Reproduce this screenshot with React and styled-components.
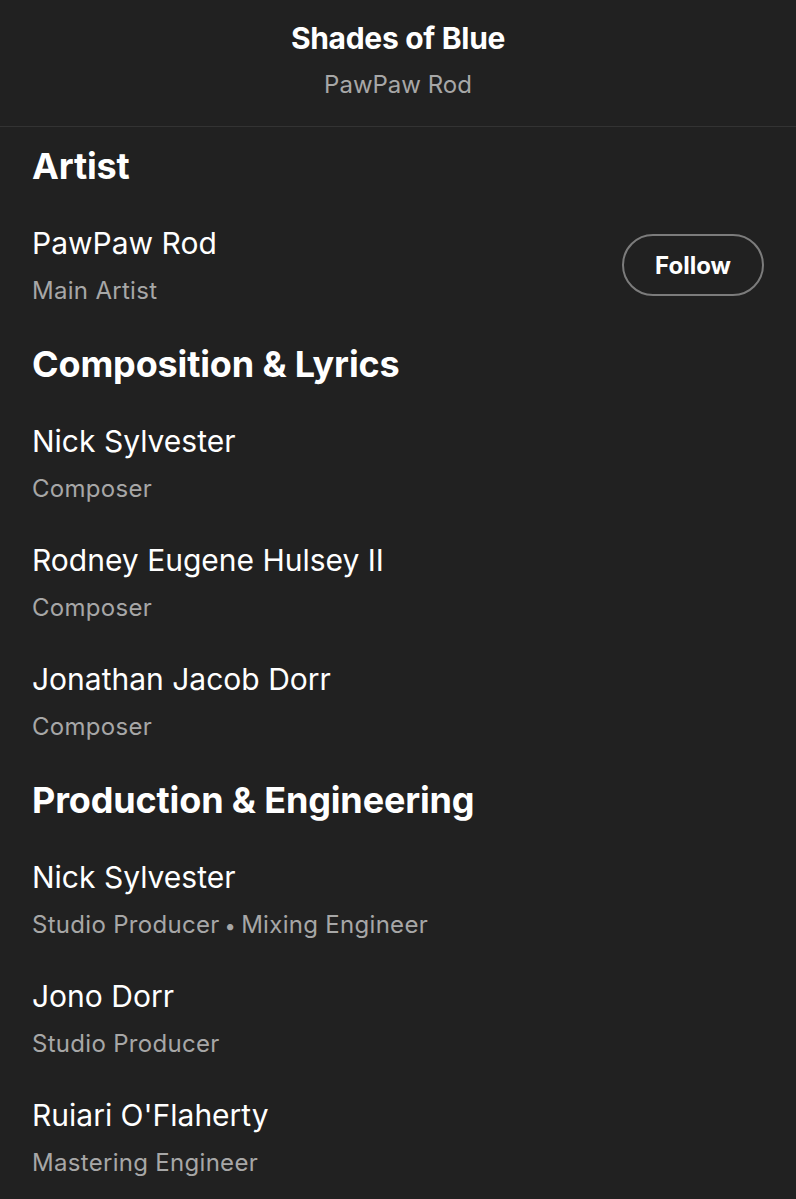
import React from 'react';
import styled, { createGlobalStyle } from 'styled-components';

const credits = [
  {
    title: 'Artist',
    people: [{ name: 'PawPaw Rod', roles: ['Main Artist'], follow: true }]
  },
  {
    title: 'Composition & Lyrics',
    people: [
      { name: 'Nick Sylvester', roles: ['Composer'] },
      { name: 'Rodney Eugene Hulsey II', roles: ['Composer'] },
      { name: 'Jonathan Jacob Dorr', roles: ['Composer'] }
    ]
  },
  {
    title: 'Production & Engineering',
    people: [
      { name: 'Nick Sylvester', roles: ['Studio Producer', 'Mixing Engineer'] },
      { name: 'Jono Dorr', roles: ['Studio Producer'] },
      { name: "Ruiari O'Flaherty", roles: ['Mastering Engineer'] }
    ]
  }
];

const GlobalStyle = createGlobalStyle`
  html, body {
    margin: 0;
    background: #212121;
  }
  body {
    font-family: Inter, "Noto Sans", sans-serif;
    color: #fff;
    -webkit-font-smoothing: antialiased;
  }
`;

const Page = styled.div`
  min-height: 1199px;
  background: #212121;
`;

const Header = styled.header`
  display: flex;
  flex-direction: column;
  align-items: center;
  gap: 13px;
  padding: 20px 32px 25px;
  border-bottom: 1px solid #333;
`;

const Title = styled.h1`
  margin: 0;
  font-size: 30px;
  line-height: 36px;
  font-weight: 700;
  letter-spacing: -0.3px;
`;

const Subtitle = styled.div`
  font-size: 24px;
  line-height: 32px;
  color: #a7a7a7;
`;

const Body = styled.main`
  display: flex;
  flex-direction: column;
  gap: 35px;
  padding: 17px 32px 0;
`;

const Section = styled.section`
  display: flex;
  flex-direction: column;
  gap: 35px;
`;

const Heading = styled.h2`
  margin: 0;
  font-size: 36px;
  line-height: 44px;
  font-weight: 700;
  letter-spacing: -0.15px;
`;

const Row = styled.div`
  display: flex;
  align-items: center;
  justify-content: space-between;
`;

const Info = styled.div`
  display: flex;
  flex-direction: column;
  gap: 12px;
`;

const Name = styled.div`
  font-size: 30px;
  line-height: 40px;
  font-weight: 400;
`;

const Role = styled.div`
  height: 32px;
  font-size: 24px;
  line-height: 32px;
  letter-spacing: 0.3px;
  color: #a7a7a7;
`;

const Sep = styled.span`
  margin: 0 5px;
  font-size: 20px;
  line-height: 1;
`;

const FollowButton = styled.button`
  height: 62px;
  padding: 0 31px;
  border: 2px solid #7c7c7c;
  border-radius: 31px;
  background: transparent;
  color: #fff;
  font-family: inherit;
  font-size: 24px;
  font-weight: 700;
  cursor: pointer;
`;

export default function App() {
  return (
    <Page>
      <GlobalStyle />
      <Header>
        <Title>Shades of Blue</Title>
        <Subtitle>PawPaw Rod</Subtitle>
      </Header>
      <Body>
        {credits.map(section => (
          <Section key={section.title}>
            <Heading>{section.title}</Heading>
            {section.people.map((p, i) => (
              <Row key={i}>
                <Info>
                  <Name>{p.name}</Name>
                  <Role>
                    {p.roles.map((r, j) => (
                      <React.Fragment key={r}>
                        {j > 0 && <Sep>•</Sep>}
                        {r}
                      </React.Fragment>
                    ))}
                  </Role>
                </Info>
                {p.follow && <FollowButton>Follow</FollowButton>}
              </Row>
            ))}
          </Section>
        ))}
      </Body>
    </Page>
  );
}
